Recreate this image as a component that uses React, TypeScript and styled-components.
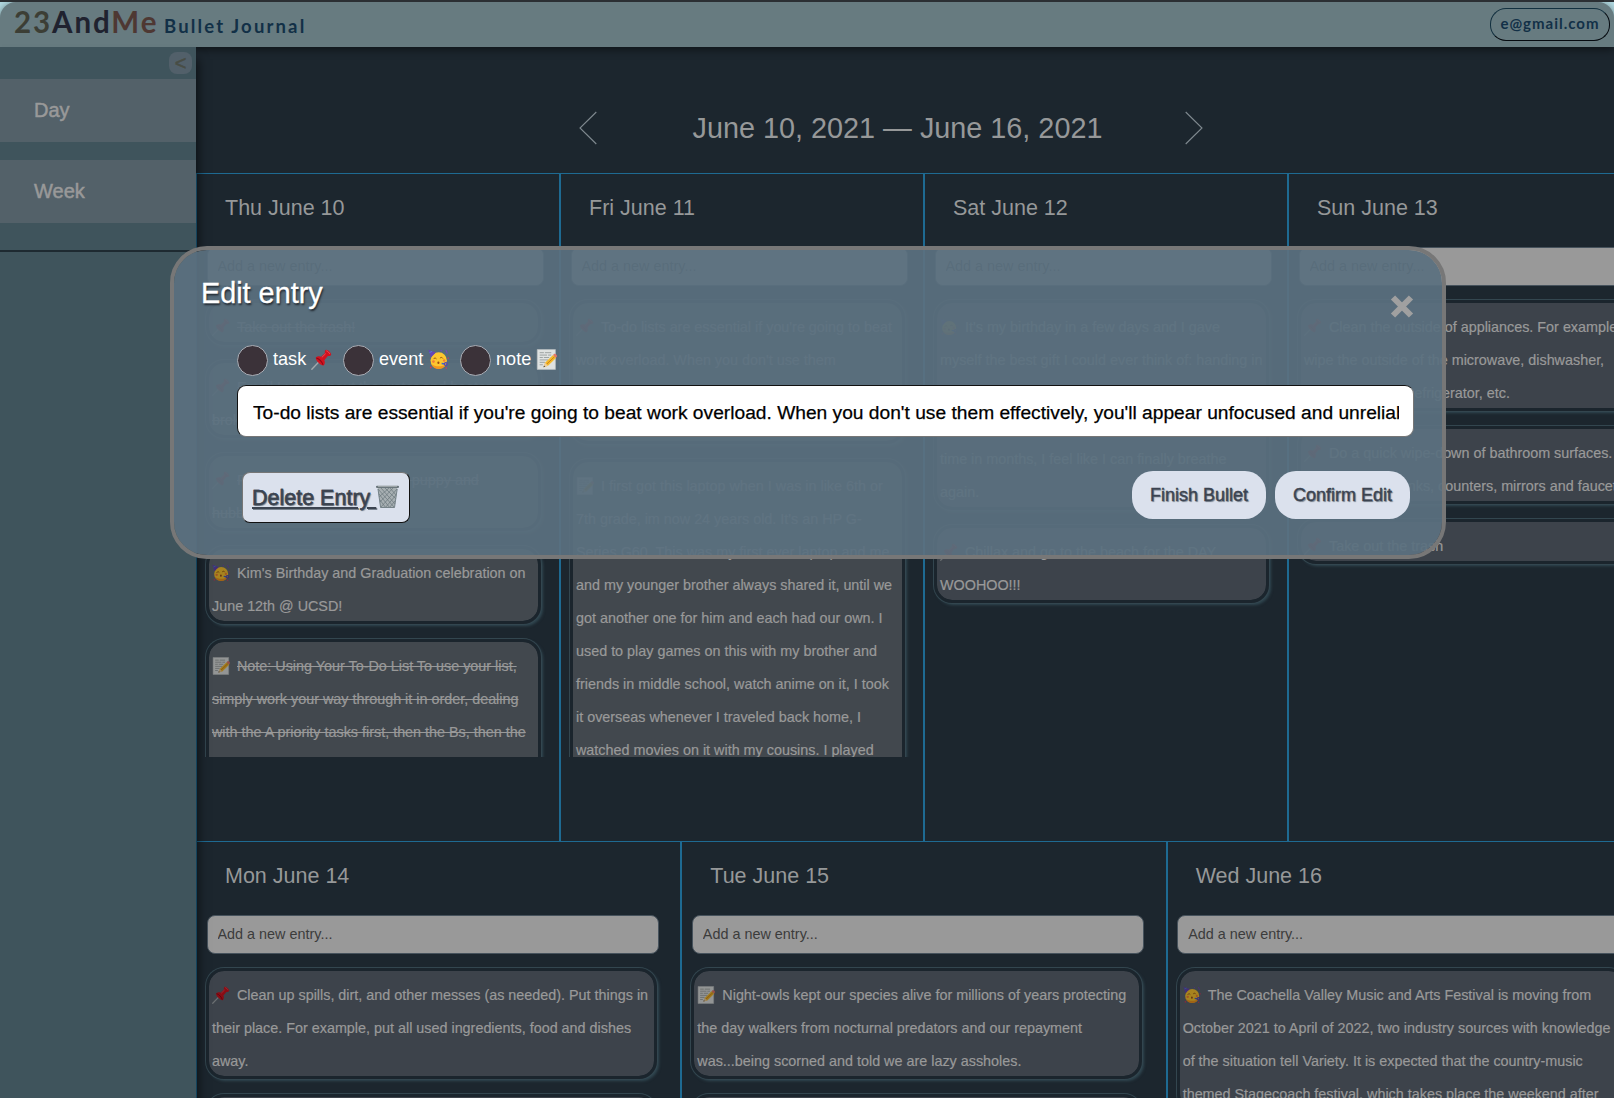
import React from "react";
import styled, { createGlobalStyle, css } from "styled-components";

const sans = `"Liberation Sans", Helvetica, Arial, sans-serif`;
const script = `"Chalkboard", "Bradley Hand", Lato, "Open Sans", sans-serif`;

const GlobalStyle = createGlobalStyle`
  *, *::before, *::after { box-sizing: border-box; }
  html, body { margin: 0; padding: 0; overflow: hidden; background: #1c262e; }
  button, input { font-family: ${sans}; }
`;

const Page = styled.div`
  position: relative;
  display: flex;
  flex-direction: column;
  width: 1614px;
  height: 1098px;
  overflow: hidden;
  border-top: 2px solid #2b2f33;
  background: linear-gradient(#b4dce4 0 20px, #1c262e 20px);
  color: #999;
  font-family: ${sans};
`;

const Header = styled.header`
  position: relative;
  z-index: 1;
  display: flex;
  align-items: center;
  justify-content: space-between;
  flex: none;
  height: 45px;
  padding: 0 4px 0 14px;
  border-radius: 16px 16px 0 0;
  background: #677b80;
  box-shadow: 0 2px 10px rgba(0, 0, 0, 0.55);
`;

const Brand = styled.div`
  display: flex;
  align-items: baseline;
  font-family: ${script};
`;

const Logo = styled.span`
  width: 150px;
  margin-top: -5px;
  font-size: 29.5px;
  font-weight: 700;
  letter-spacing: 1.9px;
  line-height: 40px;
  color: #20222f;
`;

const LogoPart = styled.span<{ $color: string }>`
  color: ${(p) => p.$color};
`;

const Tagline = styled.span`
  font-size: 18.5px;
  font-weight: 700;
  letter-spacing: 2.15px;
  color: #123047;
`;

const Account = styled.button`
  width: 120px;
  height: 33px;
  margin-top: -1px;
  padding: 0 0 2px;
  border: 1px solid #0d1a24;
  border-color: #12303f #060b10 #060b10 #12303f;
  border-radius: 16px;
  background: transparent;
  color: #123047;
  font: 700 15px ${script};
  letter-spacing: 1px;
`;

const Body = styled.div`
  display: flex;
  flex: 1;
  min-height: 0;
`;

const Sidebar = styled.aside`
  position: relative;
  z-index: 2;
  flex: none;
  width: 196px;
  background: #3f545c;
  box-shadow: 2px 12px 10px rgba(0, 0, 0, 0.6);
`;

const Nav = styled.nav`
  display: flex;
  flex-direction: column;
  gap: 18px;
  height: 205px;
  border-bottom: 2px solid #1e2a31;
`;

const CollapseRow = styled.div`
  display: flex;
  justify-content: flex-end;
  height: 32px;
  margin-bottom: -18px;
  padding: 5px 4px;
`;

const Collapse = styled.button`
  width: 23px;
  height: 22px;
  padding: 1px 0 0;
  border: 0;
  border-radius: 8px;
  background: #52606a;
  color: #484d45;
  font-size: 20px;
  line-height: 21px;
  -webkit-text-stroke: 0.5px #484d45;
`;

const NavItem = styled.a`
  display: flex;
  align-items: center;
  height: 63px;
  padding: 0 0 0 34px;
  background: #536169;
  font-size: 20px;
  -webkit-text-stroke: 0.5px #999;
`;

const Main = styled.main`
  flex: 1;
  min-width: 0;
  overflow: hidden;
`;

const RangeBar = styled.div`
  display: flex;
  justify-content: space-between;
  align-items: center;
  width: 624px;
  height: 126px;
  margin-left: 383px;
  padding-top: 36px;
`;

const RangeTitle = styled.h1`
  margin: 0 0 0 13px;
  font-size: 28.8px;
  font-weight: 400;
  white-space: nowrap;
  color: #969899;
`;

const WeekRow = styled.div<{ $cols: number; $height: number }>`
  display: grid;
  grid-template-columns: repeat(${(p) => p.$cols}, 1fr);
  width: 1456px;
  height: ${(p) => p.$height}px;
`;

const DayCell = styled.section`
  min-width: 0;
  padding-left: 9px;
  border: solid #1e6a92;
  border-width: 1px 1px 0 1px;
`;

const DayTitle = styled.h2`
  margin: 0;
  height: 73px;
  padding-left: 19px;
  font-size: 21.5px;
  font-weight: 400;
  line-height: 68px;
  color: #969899;
`;

const NewEntry = styled.input`
  display: block;
  width: calc(95% + 2px);
  height: 39px;
  margin-left: 0.5px;
  padding: 0 10px 1px;
  border: 1px solid #46525c;
  border-radius: 8px;
  background: #999;
  font-size: 14.4px;
  &::placeholder { color: #3c3c3c; opacity: 1; }
`;

const EntryList = styled.div<{ $height: number }>`
  display: flex;
  flex-direction: column;
  gap: 15px;
  height: ${(p) => p.$height}px;
  margin-left: -9px;
  padding: 14px 0 0 9px;
  overflow: hidden;
`;

const EntryCard = styled.article<{ $fill: string }>`
  flex: none;
  width: 95%;
  padding-left: 3px;
  border: 3px solid #1b252d;
  border-radius: 18px;
  background: ${(p) => p.$fill};
  background-clip: padding-box;
  box-shadow: 0 0 0 1px #33464f, 2px 2px 3px 0 rgba(70, 105, 118, 0.5);
`;

const EntryBody = styled.p<{ $done?: boolean }>`
  margin: 0;
  padding-top: 8px;
  margin-bottom: -2px;
  font-size: 14.37px;
  line-height: 33px;
  white-space: pre;
  color: #999;
  -webkit-text-stroke: 0.2px #999;
  ${(p) => p.$done && css`text-decoration: line-through;`}
  svg {
    display: inline-block;
    margin-right: 7px;
    vertical-align: -4px;
    filter: brightness(0.66);
  }
`;

const Modal = styled.form`
  position: absolute;
  z-index: 5;
  left: 170px;
  top: 244px;
  display: flex;
  flex-direction: column;
  width: 1276px;
  height: 313px;
  padding: 24px 28px 0;
  border: 4px solid #777;
  border-radius: 37px;
  background: rgba(91, 113, 128, 0.935);
  background-clip: padding-box;
`;

const ModalTop = styled.div`
  display: flex;
  justify-content: space-between;
  height: 71px;
`;

const ModalTitle = styled.h3`
  margin: 0 0 0 -1px;
  font-size: 28.8px;
  font-weight: 400;
  line-height: 38px;
  color: #fff;
  text-shadow: 1px 2px 2px #20262e;
  -webkit-text-stroke: 0.3px #fff;
`;

const CloseButton = styled.button`
  width: 24px;
  height: 25px;
  margin-top: 20px;
  padding: 0;
  border: 0;
  background: none;
`;

const Kinds = styled.div`
  display: flex;
  height: 31px;
  margin-left: 35px;
`;

const Kind = styled.label<{ $width: number }>`
  display: flex;
  align-items: center;
  width: ${(p) => p.$width}px;
  color: #fff;
  font-size: 18.1px;
  line-height: 29px;
  svg { margin: -3px 0 0 5px; }
`;

const KindText = styled.span`
  margin-top: -2px;
`;

const Radio = styled.input`
  appearance: none;
  width: 31px;
  height: 31px;
  margin: 0 5px 0 0;
  border: 1px solid #a9adb5;
  border-radius: 50%;
  background: #3b3239;
`;

const EntryText = styled.input`
  width: 1177px;
  height: 52px;
  margin: 9px 0 0 35px;
  padding: 3px 14px 0 15px;
  border: 1px solid #111;
  border-color: #111 #767676 #767676 #111;
  border-radius: 9px;
  background: #fff;
  color: #000;
  font-size: 19.2px;
  -webkit-text-stroke: 0.25px #000;
`;

const Actions = styled.div`
  display: flex;
  justify-content: space-between;
  margin: 34px 4px 0 40px;
`;

const DeleteButton = styled.button`
  display: flex;
  align-items: center;
  width: 168px;
  height: 51px;
  margin-top: 1px;
  padding: 1px 9px 0;
  border: 1px solid #767676;
  border-color: #767676 #111 #111 #767676;
  border-radius: 8px;
  background: #dbe1ed;
  color: #3b4350;
  font-size: 21.5px;
  line-height: 30px;
  text-align: left;
  text-shadow: 1px 1px 1px #78828e;
  -webkit-text-stroke: 0.4px #3b4350;
`;

const Underlined = styled.span`
  width: 149px;
  white-space: pre;
  text-decoration: underline;
  svg { vertical-align: -4px; }
`;

const Confirmations = styled.div`
  display: flex;
  gap: 9px;
`;

const PillButton = styled.button<{ $width: number }>`
  width: ${(p) => p.$width}px;
  height: 48px;
  padding: 1px 0 0;
  border: 0;
  border-radius: 21px;
  background: #dbe1ed;
  color: #3b4350;
  font-size: 18px;
  text-shadow: 1px 1px 1px #78828e;
  -webkit-text-stroke: 0.4px #3b4350;
`;

type IconProps = { size?: number };

const Pin = ({ size = 19 }: IconProps) => (
  <svg width={size} height={size} viewBox="0 0 20 20">
    <path d="M.8 19.2 8.5 11.2" stroke="#a3a9ad" strokeWidth="1.3" strokeLinecap="round" />
    <path d="M4.6 8.2c1.6-1.5 3.6-1.5 5-.8l3.7-3.6c-.5-1.5 0-2.6 1-3 1.5-.3 5 2.7 4.9 4.6-.3 1.1-1.7 1.5-3.2 1.2l-3.3 4c.7 1.7.8 3.5-.7 5.1-1.3.3-3-.8-4.600-2.300S4.200 9.700 4.600 8.200z" fill="#d3121f" />
    <path d="M5 8.500c2.300.4 5.700 3.600 6.500 6.700" fill="none" stroke="#8f0713" strokeWidth="1" />
    <path d="m10.300 8 3.700-3.600M14.600 1.700c1 .2 2.800 1.800 3.300 3" fill="none" stroke="#f1606a" strokeWidth=".7" />
  </svg>
);

const Party = ({ size = 19 }: IconProps) => (
  <svg width={size} height={size} viewBox="0 0 20 20">
    <circle cx="10.200" cy="11" r="7.800" fill="#fdc62f" />
    <path d="M3 14.200a7.800 7.800 0 0 0 14.400 0c-3.500 3-10.500 3-14.400 0z" fill="#f3961f" />
    <path d="M.4.700 7.400 3.400 2.800 8z" fill="#6645b5" />
    <path d="m1.500 3.400 2.500-1.200" stroke="#42a1db" strokeWidth=".7" />
    <path d="M5.400 9.300c.5-.9 1.700-1 2.400-.2M11.600 8.500c.7-.8 1.900-.7 2.400.2" fill="none" stroke="#8a4b12" strokeWidth=".9" strokeLinecap="round" />
    <circle cx="5.200" cy="12" r="1.300" fill="#f57e35" />
    <circle cx="15.400" cy="11" r="1.200" fill="#f57e35" />
    <ellipse cx="9.900" cy="13" rx="1" ry="1.200" fill="#9a4a12" />
    <path d="m13 13.800 3.300.5" stroke="#3c65cf" strokeWidth="1.300" />
    <circle cx="17" cy="14.300" r="1.400" fill="none" stroke="#5547b5" strokeWidth="1.200" />
    <path d="M16.800 1.200c1.800 1 .3 2.200 1.800 3M12 1.300l1.200.7" fill="none" stroke="#7048bd" strokeWidth="1.100" />
    <path d="m2 18 1.300-.8M17.800 18.600l-.9-.9M18.900 8.300l.6.900" stroke="#df355b" strokeWidth="1.200" />
  </svg>
);

const Memo = ({ size = 19 }: IconProps) => (
  <svg width={size} height={size} viewBox="0 0 20 20">
    <path d="M1.200.500h17.300v19H1.200z" fill="#dfe2e1" stroke="#bac0c1" strokeWidth=".6" />
    <path d="M3.500 3.500h4m1 0h6M3.500 5.800h7m1 0h3M3.500 8.100h3m1 0h5M3.500 10.400h8M3.500 12.700h5M3.500 15h3" stroke="#9a9f9f" strokeWidth=".9" />
    <path d="m8.600 13.200 7.600-7.400 2.900 2.700-7.700 7.500-4 1.300z" fill="#f4b92b" />
    <path d="m10.100 14.500 7.800-7.400" stroke="#c87d17" strokeWidth=".9" />
    <path d="m16.200 5.800 1.200-1.200c1-.6 3 1.300 2.500 2.500l-.9 1.200z" fill="#e47769" />
    <path d="m8.600 13.200-1.500 4.100 4.200-1.400z" fill="#edcda1" />
    <path d="m7.600 15.800-.5 1.500 1.600-.5z" fill="#333" />
  </svg>
);

const Trash = () => (
  <svg width="23" height="24" viewBox="0 0 23 24">
    <path d="M1.600 2.200h19.800L18.500 23H4.500z" fill="#a7afb2" />
    <path d="m2 4 16 18M5 3l14 16M9 3l11 11M14 3l6 7M3 9l11 14M4 15l6 8M21 4 5 22M17 3 4 17M13 3 3 12M20 10 9 23M19 16l-6 7" stroke="#69767b" strokeWidth=".7" />
    <path d="M1 1.800h21" stroke="#6b777d" strokeWidth="2.200" strokeLinecap="round" />
    <path d="M2 1.300h19" stroke="#d1d6d7" strokeWidth=".6" />
    <path d="m2 4 2.600 18.500h13.900L21.200 4" fill="none" stroke="#768389" strokeWidth="1" />
  </svg>
);

const Chevron = ({ flip }: { flip?: boolean }) => (
  <svg width="18" height="34" viewBox="0 0 18 34">
    <path d={flip ? "M.7 1 17 17 .7 33" : "M17.300 1 1 17l16.300 16"} fill="none" stroke="#7f898f" strokeWidth="1.100" />
  </svg>
);

const icons = { task: Pin, event: Party, note: Memo };

type Entry = { kind: keyof typeof icons; text: string; done?: boolean };
type Day = { title: string; entries: Entry[]; fill?: string };

const topDays: Day[] = [
  {
    title: "Thu June 10",
    fill: "#42484e",
    entries: [
      { kind: "task", done: true, text: "Take out the trash!" },
      { kind: "task", done: true, text: "Email Lucas about the water and heater\nbroken" },
      { kind: "task", done: true, text: "Pick up some treats for the puppy and\nhubby" },
      { kind: "event", text: "Kim's Birthday and Graduation celebration on\nJune 12th @ UCSD!" },
      { kind: "note", done: true, text: "Note: Using Your To-Do List To use your list,\nsimply work your way through it in order, dealing\nwith the A priority tasks first, then the Bs, then the\nCs, and so on." },
    ],
  },
  {
    title: "Fri June 11",
    fill: "#42484e",
    entries: [
      { kind: "task", text: "To-do lists are essential if you're going to beat\nwork overload. When you don't use them\neffectively, you'll appear unfocused and\nunreliable to the people around you." },
      { kind: "note", text: "I first got this laptop when I was in like 6th or\n7th grade, im now 24 years old. It's an HP G-\nSeries G60. This was my first ever laptop and me\nand my younger brother always shared it, until we\ngot another one for him and each had our own. I\nused to play games on this with my brother and\nfriends in middle school, watch anime on it, I took\nit overseas whenever I traveled back home, I\nwatched movies on it with my cousins. I played\ngames on it." },
    ],
  },
  {
    title: "Sat June 12",
    entries: [
      { kind: "event", text: "It's my birthday in a few days and I gave\nmyself the best gift I could ever think of: handing in\nmy two weeks notice at work.\nFor the first\ntime in months, I feel like I can finally breathe\nagain." },
      { kind: "task", text: "Chillax and go to the beach for the DAY\nWOOHOO!!!" },
    ],
  },
  {
    title: "Sun June 13",
    entries: [
      { kind: "task", text: "Clean the outside of appliances. For example,\nwipe the outside of the microwave, dishwasher,\nstove, oven and refrigerator, etc." },
      { kind: "task", text: "Do a quick wipe-down of bathroom surfaces.\nWipe down all sinks, counters, mirrors and faucets." },
      { kind: "task", text: "Take out the trash" },
    ],
  },
];

const bottomDays: Day[] = [
  {
    title: "Mon June 14",
    entries: [
      { kind: "task", text: "Clean up spills, dirt, and other messes (as needed). Put things in\ntheir place. For example, put all used ingredients, food and dishes\naway." },
      { kind: "task", text: "Take out the trash" },
    ],
  },
  {
    title: "Tue June 15",
    entries: [
      { kind: "note", text: "Night-owls kept our species alive for millions of years protecting\nthe day walkers from nocturnal predators and our repayment\nwas...being scorned and told we are lazy assholes." },
      { kind: "task", text: "Take out the trash" },
    ],
  },
  {
    title: "Wed June 16",
    entries: [
      { kind: "event", text: "The Coachella Valley Music and Arts Festival is moving from\nOctober 2021 to April of 2022, two industry sources with knowledge\nof the situation tell Variety. It is expected that the country-music\nthemed Stagecoach festival, which takes place the weekend after" },
    ],
  },
];

const DayColumn = ({ day, listHeight }: { day: Day; listHeight: number }) => (
  <DayCell>
    <DayTitle>{day.title}</DayTitle>
    <NewEntry placeholder="Add a new entry..." />
    <EntryList $height={listHeight}>
      {day.entries.map((entry, i) => {
        const Icon = icons[entry.kind];
        return (
          <EntryCard key={i} $fill={day.fill ?? "#3d434b"}>
            <EntryBody $done={entry.done}>
              <Icon size={18} />
              {entry.text}
            </EntryBody>
          </EntryCard>
        );
      })}
    </EntryList>
  </DayCell>
);

const kinds = [
  { name: "task", width: 106, Icon: Pin },
  { name: "event", width: 117, Icon: Party },
  { name: "note", width: 110, Icon: Memo },
];

export default function App() {
  return (
    <>
      <GlobalStyle />
      <Page>
        <Header>
          <Brand>
            <Logo>
              <LogoPart $color="#3c3e35">23</LogoPart>And<LogoPart $color="#4e3833">Me</LogoPart>
            </Logo>
            <Tagline>Bullet Journal</Tagline>
          </Brand>
          <Account>e@gmail.com</Account>
        </Header>
        <Body>
          <Sidebar>
            <Nav>
              <CollapseRow>
                <Collapse>&lt;</Collapse>
              </CollapseRow>
              <NavItem>Day</NavItem>
              <NavItem>Week</NavItem>
            </Nav>
          </Sidebar>
          <Main>
            <RangeBar>
              <Chevron />
              <RangeTitle>June 10, 2021 — June 16, 2021</RangeTitle>
              <Chevron flip />
            </RangeBar>
            <WeekRow $cols={4} $height={668}>
              {topDays.map((day) => (
                <DayColumn key={day.title} day={day} listHeight={471} />
              ))}
            </WeekRow>
            <WeekRow $cols={3} $height={560}>
              {bottomDays.map((day) => (
                <DayColumn key={day.title} day={day} listHeight={440} />
              ))}
            </WeekRow>
          </Main>
        </Body>
        <Modal>
          <ModalTop>
            <ModalTitle>Edit entry</ModalTitle>
            <CloseButton type="button" aria-label="Close">
              <svg width="24" height="25" viewBox="0 0 24 25">
                <path d="m3 3.500 18 18M21 3.500l-18 18" stroke="#a0a0a0" strokeWidth="6" strokeLinecap="butt" />
              </svg>
            </CloseButton>
          </ModalTop>
          <Kinds>
            {kinds.map(({ name, width, Icon }) => (
              <Kind key={name} $width={width}>
                <Radio type="radio" name="kind" />
                <KindText>{name}</KindText>
                <Icon size={21} />
              </Kind>
            ))}
          </Kinds>
          <EntryText defaultValue="To-do lists are essential if you're going to beat work overload. When you don't use them effectively, you'll appear unfocused and unreliable to the people around you." />
          <Actions>
            <DeleteButton type="button">
              <Underlined>
                Delete Entry <Trash />
              </Underlined>
            </DeleteButton>
            <Confirmations>
              <PillButton type="button" $width={134}>Finish Bullet</PillButton>
              <PillButton type="button" $width={135}>Confirm Edit</PillButton>
            </Confirmations>
          </Actions>
        </Modal>
      </Page>
    </>
  );
}
